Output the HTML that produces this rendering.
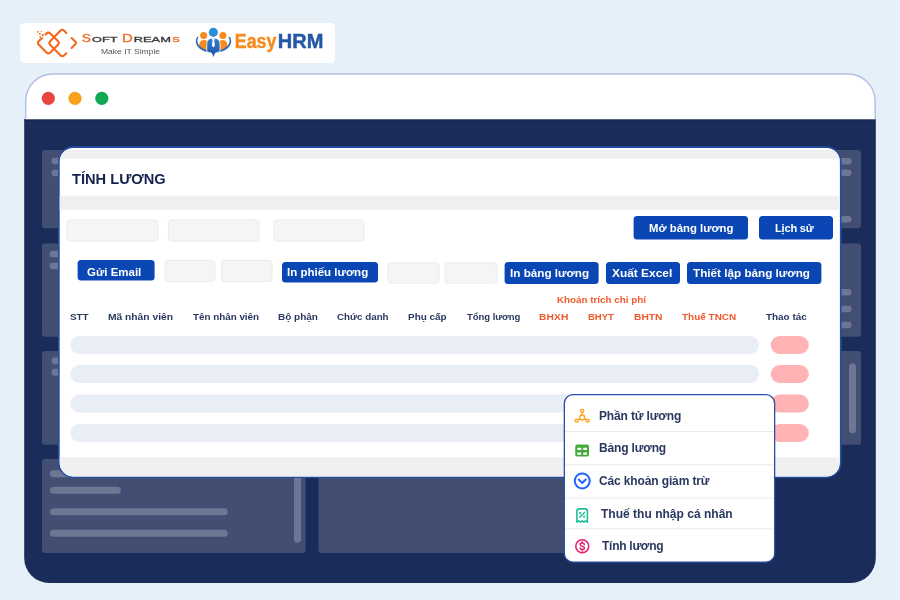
<!DOCTYPE html>
<html lang="vi">
<head>
<meta charset="utf-8">
<title>Tính lương - EasyHRM</title>
<style>
  html,body{margin:0;padding:0;font-family:"Liberation Sans",sans-serif;}
  body{width:900px;height:600px;overflow:hidden;position:relative;background:#e6f0f8;font-family:"Liberation Sans",sans-serif;}
  .a{position:absolute;}
  .t{will-change:transform;transform-origin:0 0;position:absolute;white-space:pre;line-height:1;font-family:"Liberation Sans",sans-serif;}
</style>
</head>
<body>

<!-- logo card -->
<div class="a" style="left:20px;top:23px;width:315px;height:40px;background:#fff;border-radius:4.5px;"></div>
<svg class="a" style="left:0;top:0;will-change:transform;" width="900" height="70" viewBox="0 0 900 70">
  <defs>
    <linearGradient id="bodyg" x1="0" y1="0" x2="0" y2="1">
      <stop offset="0" stop-color="#2c7fd0"/><stop offset="1" stop-color="#1e4f9f"/>
    </linearGradient>
  </defs>
  <!-- Soft Dreams mark -->
  <g fill="none" stroke="#f26a21" stroke-width="2.1" stroke-linecap="round" stroke-linejoin="round">
    <path d="M45.40,34.60 L46.56,33.44 Q48.40,31.60 50.25,33.43 L57.95,41.07 Q59.80,42.90 57.96,44.74 L50.24,52.46 Q48.40,54.30 46.56,52.46 L38.84,44.74 Q37.00,42.90 38.86,41.08 L41.80,38.20"/>
    <path d="M66.30,32.90 L64.26,30.80 Q62.30,28.80 60.33,30.79 L50.37,40.91 Q48.40,42.90 50.35,44.91 L60.35,55.19 Q62.30,57.20 64.30,55.25 L66.30,53.30"/>
    <path d="M71.60,38.00 L75.26,41.51 Q76.70,42.90 75.29,44.31 L71.60,48.00"/>
  </g>
  <g fill="#f26a21">
    <rect x="37.1" y="31.1" width="1.6" height="1.6"/>
    <rect x="40.9" y="31.1" width="1.1" height="1.1"/>
    <rect x="39" y="33" width="1.6" height="1.6"/>
    <rect x="41.7" y="34.1" width="2" height="2"/>
    <rect x="39.4" y="36.3" width="1.5" height="1.5"/>
    <rect x="42.4" y="37.2" width="1" height="1" opacity="0.6"/>
  </g>
  <!-- SOFT DREAMS wordmark -->
  <g font-family="Liberation Sans, sans-serif" font-weight="400" stroke-width="0.3" paint-order="stroke">
    <text x="81.7" y="41.7" font-size="11" fill="#f26a21" stroke="#f26a21" textLength="9.3" lengthAdjust="spacingAndGlyphs">S</text>
    <text x="92" y="41.7" font-size="7.5" fill="#3a3a3a" stroke="#3a3a3a" textLength="25.4" lengthAdjust="spacingAndGlyphs">OFT</text>
    <text x="121.9" y="41.7" font-size="11" fill="#f26a21" stroke="#f26a21" textLength="10.8" lengthAdjust="spacingAndGlyphs">D</text>
    <text x="133.7" y="41.7" font-size="7.5" fill="#3a3a3a" stroke="#3a3a3a" textLength="37.3" lengthAdjust="spacingAndGlyphs">REAM</text>
    <text x="172" y="41.7" font-size="7.5" fill="#f26a21" stroke="#f26a21" textLength="7.7" lengthAdjust="spacingAndGlyphs">S</text>
  </g>
  <!-- EasyHRM mark -->
  <circle cx="203.7" cy="35.45" r="3.55" fill="#f68b1f"/>
  <circle cx="222.9" cy="35.45" r="3.55" fill="#f68b1f"/>
  <path d="M199,46.8 Q198.7,40.2 203.7,39.9 Q207.6,39.9 207.4,42 L207.2,51.8 Q202.2,50.8 199,46.8 Z" fill="#f68b1f"/>
  <path d="M227.6,46.8 Q227.9,40.2 222.9,39.9 Q219,39.9 219.2,42 L219.4,51.8 Q224.4,50.8 227.6,46.8 Z" fill="#f68b1f"/>
  <path d="M197.09,36.99 L196.52,38.05 L196.11,39.15 L195.87,40.26 L195.80,41.38 L195.90,42.50 L196.16,43.61 L196.59,44.70 L197.18,45.76 L197.93,46.77 L198.83,47.73 L199.86,48.63 L201.03,49.46 L202.31,50.21 L203.70,50.88 L205.19,51.45 L206.76,51.93 L208.38,52.31 L210.06,52.58 L211.77,52.75 L213.50,52.80 L215.23,52.75 L216.94,52.58 L218.62,52.31 L220.24,51.93 L221.81,51.45 L223.30,50.88 L224.69,50.21 L225.97,49.46 L227.14,48.63 L228.17,47.73 L229.07,46.77 L229.82,45.76 L230.41,44.70 L230.84,43.61 L231.10,42.50 L231.20,41.38 L231.13,40.26 L230.89,39.15 L230.48,38.05 L229.91,36.99 L228.21,36.69 L228.79,37.63 L229.21,38.60 L229.48,39.59 L229.60,40.59 L229.55,41.59 L229.35,42.59 L228.98,43.57 L228.47,44.52 L227.81,45.43 L227.00,46.30 L226.06,47.11 L225.00,47.87 L223.83,48.55 L222.55,49.15 L221.18,49.68 L219.74,50.11 L218.23,50.45 L216.68,50.70 L215.10,50.85 L213.50,50.90 L211.90,50.85 L210.32,50.70 L208.77,50.45 L207.26,50.11 L205.82,49.68 L204.45,49.15 L203.17,48.55 L202.00,47.87 L200.94,47.11 L200.00,46.30 L199.19,45.43 L198.53,44.52 L198.02,43.57 L197.65,42.59 L197.45,41.59 L197.40,40.59 L197.52,39.59 L197.79,38.60 L198.21,37.63 L198.79,36.69 Z" fill="#2a6cbe"/>
  <circle cx="213.4" cy="32.4" r="4.55" fill="#2b8fd7"/>
  <path d="M206.8,51.7 L206.8,44 Q206.8,38.1 213.4,38.1 Q220,38.1 220,44 L220,51.7 Q217.4,52.4 215.4,53.1 L213.4,57.8 L211.4,53.1 Q209.4,52.4 206.8,51.7 Z" fill="url(#bodyg)" stroke="#fff" stroke-width="0.8"/>
  <path d="M212.3,38.4 L214.5,38.4 L214.8,39.8 L214.2,40.8 L215,45.6 L213.4,47.4 L211.8,45.6 L212.6,40.8 L212,39.8 Z" fill="#fff"/>
  <g font-family="Liberation Sans, sans-serif" font-weight="700" font-size="19.4" stroke-width="0.45">
    <text x="234.8" y="47.7" fill="#f68b1f" stroke="#f68b1f" textLength="41.6" lengthAdjust="spacingAndGlyphs">Easy</text>
    <text x="277.8" y="47.7" fill="#2457a7" stroke="#2457a7" textLength="45.6" lengthAdjust="spacingAndGlyphs">HRM</text>
  </g>
</svg>

<!-- all window shapes in one SVG for sub-pixel accuracy -->
<svg class="a" style="left:0;top:0;" width="900" height="600" viewBox="0 0 900 600">
  <defs>
    <clipPath id="panelclip"><rect x="59.7" y="148" width="780.2" height="328.4" rx="13.6"/></clipPath>
    <clipPath id="popclip"><rect x="565" y="395.3" width="209" height="166.1" rx="8"/></clipPath>
  </defs>
  <!-- browser window -->
  <path d="M24.2,119.3 L875.8,119.3 L875.8,558 A25,25 0 0 1 850.8,583 L49.2,583 A25,25 0 0 1 24.2,558 Z" fill="#1a2c5a"/>
  <rect x="24.2" y="119.3" width="851.6" height="1.1" fill="#12214d"/>
  <path d="M25.7,119.3 L25.7,101 A27,27 0 0 1 52.7,74 L848.1,74 A27,27 0 0 1 875.1,101 L875.1,119.3" fill="#ffffff" stroke="#b0bfe5" stroke-width="1.4"/>
  <!-- traffic lights -->
  <circle cx="48.3" cy="98.3" r="6.6" fill="#e7463e"/>
  <circle cx="75" cy="98.3" r="6.6" fill="#f9a11b"/>
  <circle cx="101.8" cy="98.3" r="6.6" fill="#10a952"/>
  <!-- dashboard blocks -->
  <g fill="#424f72">
    <rect x="42" y="150" width="819" height="78.3" rx="3"/>
    <rect x="42" y="243.4" width="819" height="93.3" rx="3"/>
    <rect x="42" y="351" width="819" height="93.8" rx="3"/>
    <rect x="42" y="459" width="263.6" height="94" rx="3"/>
    <rect x="318.5" y="459" width="400" height="94" rx="3"/>
  </g>
  <g fill="#6d7794">
    <!-- left pills -->
    <rect x="51.5" y="157.7" width="20" height="6.6" rx="3.3"/>
    <rect x="51.5" y="169.7" width="20" height="6.6" rx="3.3"/>
    <rect x="49.5" y="250.7" width="20" height="6.6" rx="3.3"/>
    <rect x="49.5" y="262.7" width="20" height="6.6" rx="3.3"/>
    <rect x="51.5" y="357.3" width="20" height="7" rx="3.5"/>
    <rect x="51.5" y="368.8" width="20" height="7" rx="3.5"/>
    <!-- right pills -->
    <rect x="831.5" y="158" width="20" height="6.6" rx="3.3"/>
    <rect x="831.5" y="169.4" width="20" height="6.6" rx="3.3"/>
    <rect x="831.5" y="216" width="20" height="6.6" rx="3.3"/>
    <rect x="831.5" y="289" width="20" height="6.6" rx="3.3"/>
    <rect x="831.5" y="305.7" width="20" height="6.6" rx="3.3"/>
    <rect x="831.5" y="321.7" width="20" height="6.6" rx="3.3"/>
    <!-- scroll thumbs + bottom lines -->
    <rect x="849" y="363.3" width="7" height="70" rx="3.5"/>
    <rect x="50" y="470.2" width="40" height="7" rx="3.5"/>
    <rect x="50" y="486.7" width="70.8" height="7" rx="3.5"/>
    <rect x="50" y="508.2" width="177.7" height="7" rx="3.5"/>
    <rect x="50" y="529.8" width="177.7" height="7" rx="3.5"/>
    <rect x="294" y="465" width="7" height="77.7" rx="3.5"/>
  </g>

  <!-- main panel -->
  <rect x="58.85" y="147.15" width="781.9" height="330.1" rx="14.5" fill="#ffffff" stroke="#234ca3" stroke-width="1.7"/>
  <g clip-path="url(#panelclip)" fill="#efefef">
    <rect x="55" y="150" width="790" height="8.7"/>
    <rect x="55" y="195.7" width="783.7" height="14.3"/>
    <rect x="55" y="457.3" width="783.7" height="22"/>
  </g>
  <!-- filter placeholders -->
  <g fill="#f5f5f5" stroke="#ebebeb" stroke-width="1">
    <rect x="67.1" y="219.9" width="90.8" height="21.2" rx="3.2"/>
    <rect x="168.5" y="219.9" width="90.6" height="21.2" rx="3.2"/>
    <rect x="273.9" y="219.9" width="90" height="21.2" rx="3.2"/>
    <rect x="164.9" y="260.5" width="50" height="21" rx="3.2"/>
    <rect x="221.5" y="260.5" width="50.6" height="21" rx="3.2"/>
    <rect x="387.9" y="262.9" width="51.2" height="20.2" rx="3.2"/>
    <rect x="444.9" y="262.9" width="52" height="20.2" rx="3.2"/>
  </g>
  <!-- buttons -->
  <g fill="#0a46b4">
    <rect x="633.6" y="216" width="114.4" height="23.5" rx="3.5"/>
    <rect x="759" y="216" width="74" height="23.5" rx="3.5"/>
    <rect x="77.6" y="260" width="77" height="20.6" rx="3.5"/>
    <rect x="282" y="262" width="96" height="20.5" rx="3.5"/>
    <rect x="504.6" y="262" width="94" height="21.9" rx="3.5"/>
    <rect x="606" y="261.9" width="74" height="22.1" rx="3.5"/>
    <rect x="687" y="262" width="134.4" height="22" rx="3.5"/>
  </g>
  <!-- rows -->
  <g fill="#e9edf6">
    <rect x="70.3" y="336" width="688.9" height="18" rx="9"/>
    <rect x="70.3" y="365" width="688.9" height="18" rx="9"/>
    <rect x="70.3" y="394.6" width="688.9" height="18" rx="9"/>
    <rect x="70.3" y="424" width="688.9" height="18" rx="9"/>
  </g>
  <g fill="#ffb3b5">
    <rect x="770.7" y="336" width="38.1" height="18" rx="9"/>
    <rect x="770.7" y="365" width="38.1" height="18" rx="9"/>
    <rect x="770.7" y="394.6" width="38.1" height="18" rx="9"/>
    <rect x="770.7" y="424" width="38.1" height="18" rx="9"/>
  </g>

  <!-- popup menu -->
  <rect x="564.35" y="394.65" width="210.3" height="167.4" rx="8.6" fill="#ffffff" stroke="#2a50a5" stroke-width="1.3"/>
  <g clip-path="url(#popclip)" fill="#ececf0">
    <rect x="560" y="431" width="220" height="1"/>
    <rect x="560" y="464.2" width="220" height="1"/>
    <rect x="560" y="497.6" width="220" height="1"/>
    <rect x="560" y="528.2" width="220" height="1"/>
  </g>
</svg>
<!-- popup icons -->
<svg class="a" style="left:560px;top:390px;will-change:transform;" width="60" height="180" viewBox="560 390 60 180">
  <!-- molecule -->
  <g fill="none" stroke="#ffa41c" stroke-width="1.4">
    <circle cx="582.15" cy="417.5" r="2.5"/>
    <circle cx="582.15" cy="410.9" r="1.5"/>
    <circle cx="576.6" cy="420.6" r="1.5"/>
    <circle cx="587.7" cy="420.6" r="1.5"/>
    <path d="M582.15,412.4 L582.15,415 M580,418.7 L578,419.8 M584.3,418.7 L586.3,419.8"/>
  </g>
  <!-- table -->
  <rect x="575.25" y="444.5" width="13.75" height="12" rx="1.9" fill="#45aa3c"/>
  <g fill="#fff">
    <rect x="577.25" y="447.7" width="4" height="2.3" rx="0.4"/>
    <rect x="583.2" y="447.7" width="3.8" height="2.3" rx="0.4"/>
    <rect x="577.25" y="452.4" width="4" height="2.3" rx="0.4"/>
    <rect x="583.2" y="452.4" width="3.8" height="2.3" rx="0.4"/>
  </g>
  <!-- circle chevron -->
  <g fill="none" stroke="#2764ff" stroke-width="2" stroke-linecap="round" stroke-linejoin="round">
    <circle cx="582.25" cy="480.9" r="7.5"/>
    <path d="M578.7,479.6 L582.25,482.9 L585.8,479.6"/>
  </g>
  <!-- receipt -->
  <g fill="none" stroke="#1fbe9b" stroke-width="1.6" stroke-linejoin="round" stroke-linecap="round">
    <path d="M576.9,522.2 L576.9,511.2 Q576.9,508.9 579.2,508.9 L585.1,508.9 Q587.4,508.9 587.4,511.2 L587.4,522.2 L585.65,520.8 L583.9,522.2 L582.15,520.8 L580.4,522.2 L578.65,520.8 Z"/>
    <path d="M579.8,517.3 L584.4,512.6" stroke-width="1.5"/>
  </g>
  <circle cx="580.1" cy="513.2" r="1.15" fill="#1fbe9b"/>
  <circle cx="584.1" cy="516.7" r="1.15" fill="#1fbe9b"/>
  <!-- dollar -->
  <circle cx="582.25" cy="546.25" r="6.5" fill="none" stroke="#e0246f" stroke-width="1.5"/>
  <path d="M584.3,544.5 Q584.2,543.1 582.25,543.1 Q580.2,543.1 580.2,544.7 Q580.2,546 582.25,546.3 Q584.4,546.6 584.4,548 Q584.4,549.5 582.25,549.5 Q580.2,549.5 580.1,548.1 M582.25,541.7 L582.25,543 M582.25,549.6 L582.25,550.9" fill="none" stroke="#e0246f" stroke-width="1.5" stroke-linecap="round"/>
</svg>

<span class="t" style="left:72.24px;top:172.15px;font-size:14.0px;letter-spacing:0.000px;color:#15214e;font-weight:700;transform:scaleX(1.0452);">TÍNH LƯƠNG</span>
<span class="t" style="left:648.83px;top:222.69px;font-size:11.0px;letter-spacing:0.000px;color:#ffffff;font-weight:700;transform:scaleX(1.0330);">Mở bảng lương</span>
<span class="t" style="left:775.25px;top:222.69px;font-size:11.0px;letter-spacing:-0.167px;color:#ffffff;font-weight:700;">Lịch sử</span>
<span class="t" style="left:86.88px;top:266.69px;font-size:11.0px;letter-spacing:0.000px;color:#ffffff;font-weight:700;transform:scaleX(1.0443);">Gửi Email</span>
<span class="t" style="left:287.21px;top:267.09px;font-size:11.0px;letter-spacing:0.000px;color:#ffffff;font-weight:700;transform:scaleX(1.0474);">In phiếu lương</span>
<span class="t" style="left:509.60px;top:268.09px;font-size:11.0px;letter-spacing:0.000px;color:#ffffff;font-weight:700;transform:scaleX(1.0630);">In bảng lương</span>
<span class="t" style="left:611.53px;top:268.09px;font-size:11.0px;letter-spacing:0.000px;color:#ffffff;font-weight:700;transform:scaleX(1.0826);">Xuất Excel</span>
<span class="t" style="left:692.73px;top:268.09px;font-size:11.0px;letter-spacing:0.000px;color:#ffffff;font-weight:700;transform:scaleX(1.0642);">Thiết lập bảng lương</span>
<span class="t" style="left:70.14px;top:312.36px;font-size:9.5px;letter-spacing:0.000px;color:#2a3860;font-weight:700;transform:scaleX(1.0400);">STT</span>
<span class="t" style="left:107.79px;top:312.36px;font-size:9.5px;letter-spacing:0.000px;color:#2a3860;font-weight:700;transform:scaleX(1.0791);">Mã nhân viên</span>
<span class="t" style="left:192.60px;top:312.36px;font-size:9.5px;letter-spacing:0.000px;color:#2a3860;font-weight:700;transform:scaleX(1.0340);">Tên nhân viên</span>
<span class="t" style="left:278.21px;top:312.36px;font-size:9.5px;letter-spacing:0.000px;color:#2a3860;font-weight:700;transform:scaleX(1.0503);">Bộ phận</span>
<span class="t" style="left:337.49px;top:312.36px;font-size:9.5px;letter-spacing:0.000px;color:#2a3860;font-weight:700;transform:scaleX(1.0286);">Chức danh</span>
<span class="t" style="left:407.82px;top:312.36px;font-size:9.5px;letter-spacing:0.000px;color:#2a3860;font-weight:700;transform:scaleX(1.0462);">Phụ cấp</span>
<span class="t" style="left:467.00px;top:312.36px;font-size:9.5px;letter-spacing:-0.044px;color:#2a3860;font-weight:700;">Tổng lương</span>
<span class="t" style="left:539.17px;top:312.93px;font-size:9.3px;letter-spacing:0.152px;color:#f0592a;font-weight:700;transform:scaleX(1.1000);">BHXH</span>
<span class="t" style="left:588.23px;top:312.93px;font-size:9.3px;letter-spacing:0.000px;color:#f0592a;font-weight:700;transform:scaleX(1.0204);">BHYT</span>
<span class="t" style="left:634.17px;top:312.93px;font-size:9.3px;letter-spacing:0.015px;color:#f0592a;font-weight:700;transform:scaleX(1.1000);">BHTN</span>
<span class="t" style="left:682.40px;top:312.93px;font-size:9.3px;letter-spacing:0.000px;color:#f0592a;font-weight:700;transform:scaleX(1.0720);">Thuế TNCN</span>
<span class="t" style="left:765.60px;top:312.16px;font-size:9.5px;letter-spacing:0.000px;color:#2a3860;font-weight:700;transform:scaleX(1.0426);">Thao tác</span>
<span class="t" style="left:556.85px;top:296.08px;font-size:9.0px;letter-spacing:0.000px;color:#f0592a;font-weight:700;transform:scaleX(1.0905);">Khoản trích chi phí</span>
<span class="t" style="left:598.65px;top:409.54px;font-size:12.0px;letter-spacing:-0.137px;color:#2a3860;font-weight:700;">Phần tử lương</span>
<span class="t" style="left:598.65px;top:441.64px;font-size:12.0px;letter-spacing:-0.156px;color:#2a3860;font-weight:700;">Bảng lương</span>
<span class="t" style="left:598.90px;top:474.64px;font-size:12.0px;letter-spacing:-0.132px;color:#2a3860;font-weight:700;">Các khoản giảm trừ</span>
<span class="t" style="left:600.75px;top:508.04px;font-size:12.0px;letter-spacing:0.000px;color:#2a3860;font-weight:700;transform:scaleX(1.0027);">Thuế thu nhập cá nhân</span>
<span class="t" style="left:602.35px;top:540.04px;font-size:12.0px;letter-spacing:-0.261px;color:#2a3860;font-weight:700;">Tính lương</span>
<span class="t" style="left:100.88px;top:47.65px;font-size:7.8px;letter-spacing:0.000px;color:#555555;font-weight:400;transform:scaleX(1.0943);">Make IT Simple</span>

</body>
</html>
